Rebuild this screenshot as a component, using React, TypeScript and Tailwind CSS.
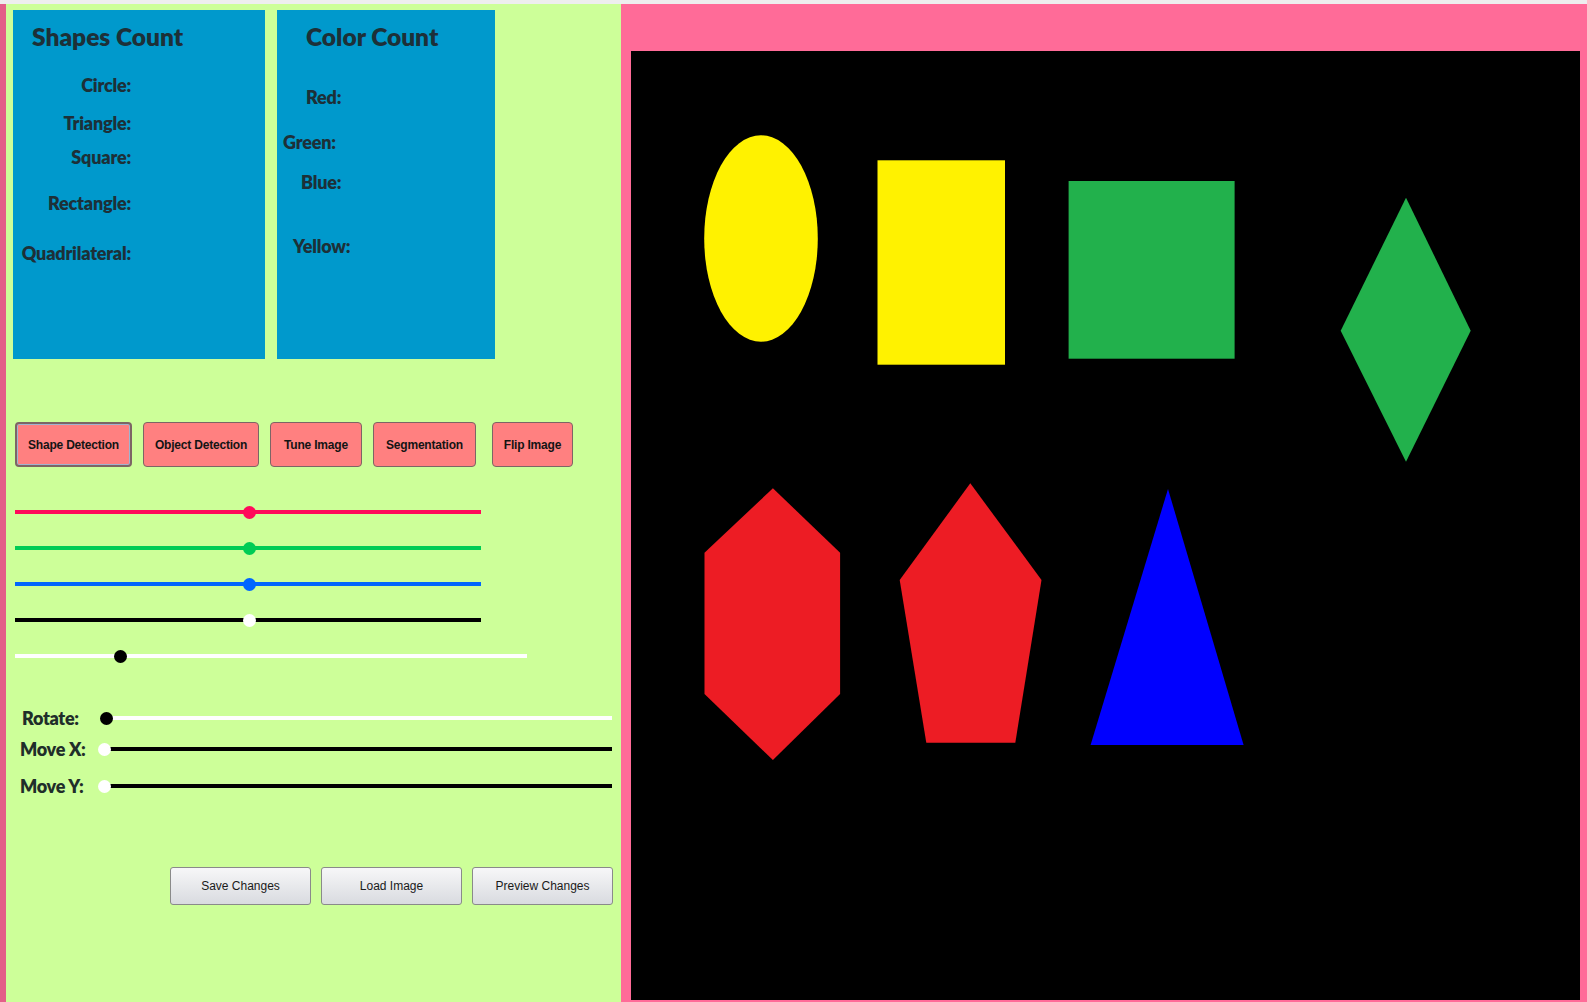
import React from "react";

const lato = { fontFamily: "Lato, 'Open Sans', sans-serif" };

function Slider({
  width,
  track,
  thumb,
  thumbLeft,
}: {
  width: number;
  track: string;
  thumb: string;
  thumbLeft: number;
}) {
  return (
    <div className="relative flex h-[14px] items-center" style={{ width }}>
      <div className={`h-[4px] w-full ${track}`} />
      <div
        className={`absolute top-[0.5px] h-[13px] w-[13px] rounded-full ${thumb}`}
        style={{ left: thumbLeft }}
      />
    </div>
  );
}

function MoveRow({
  label,
  track,
  thumb,
  labelPad,
  thumbLeft,
  className,
}: {
  label: string;
  track: string;
  thumb: string;
  labelPad: string;
  thumbLeft: number;
  className: string;
}) {
  return (
    <div className={`flex h-[20px] items-center ${className}`}>
      <div
        className={`w-[92px] ${labelPad} whitespace-nowrap text-[18px] font-extrabold leading-[20px] tracking-[-0.3px] text-[#1f2e2a]`}
        style={lato}
      >
        {label}
      </div>
      <div className="relative flex h-[14px] flex-1 items-center pl-[6px]">
        <div className={`h-[4px] w-full ${track}`} />
        <div
          className={`absolute top-[0.5px] h-[13px] w-[13px] rounded-full ${thumb}`}
          style={{ left: thumbLeft }}
        />
      </div>
    </div>
  );
}

export default function App() {
  const redBtn =
    "h-[45px] rounded-[4px] border border-[#7d6565] bg-[#ff8080] text-[12px] font-bold tracking-[-0.2px] text-[#141414]";
  const grayBtn =
    "h-[38px] w-[141px] rounded-[3px] border border-[#8a8a8a] bg-gradient-to-b from-[#f7f7f8] to-[#d9dbe0] text-[12px] text-[#1a1a1a]";
  const arial = { fontFamily: "'Liberation Sans', Arial, sans-serif" };
  const labelCls =
    "h-[20px] whitespace-nowrap text-[18px] font-extrabold leading-[20px] tracking-[-0.2px] text-[#1d3038]";

  return (
    <div className="flex h-[1002px] w-[1587px] flex-col overflow-hidden bg-[#eeeeee]">
      <div className="h-[4px] w-full shrink-0" />
      <div className="flex h-[998px] w-full">
        <div className="w-[6px] shrink-0 bg-[#e35f88]" />
        {/* Left control panel */}
        <div className="flex w-[615px] shrink-0 flex-col bg-[#cdff99]">
          {/* count boxes */}
          <div className="ml-[7px] mt-[6px] flex gap-[12px]">
            <div
              className="flex h-[349px] w-[252px] flex-col bg-[#0099cc] pt-[12px]"
              style={lato}
            >
              <div className="h-[30px] whitespace-nowrap pl-[19px] text-[24.5px] font-extrabold leading-[30px] text-[#1d3038]">
                Shapes Count
              </div>
              <div className="w-[118px] text-right">
                <div className={`${labelCls} mt-[23px]`}>Circle:</div>
                <div className={`${labelCls} mt-[18px]`}>Triangle:</div>
                <div className={`${labelCls} mt-[14px]`}>Square:</div>
                <div className={`${labelCls} mt-[26px]`}>Rectangle:</div>
                <div className={`${labelCls} mt-[30px]`}>Quadrilateral:</div>
              </div>
            </div>
            <div
              className="flex h-[349px] w-[218px] flex-col bg-[#0099cc] pt-[12px]"
              style={lato}
            >
              <div className="h-[30px] whitespace-nowrap pl-[29px] text-[24.5px] font-extrabold leading-[30px] text-[#1d3038]">
                Color Count
              </div>
              <div className={`${labelCls} mt-[35px] pl-[29px]`}>Red:</div>
              <div className={`${labelCls} mt-[25px] pl-[6px]`}>Green:</div>
              <div className={`${labelCls} mt-[20px] pl-[24px]`}>Blue:</div>
              <div className={`${labelCls} mt-[44px] pl-[16px]`}>Yellow:</div>
            </div>
          </div>

          {/* tool buttons */}
          <div className="ml-[9px] mt-[63px] flex" style={arial}>
            <button
              className={`${redBtn} w-[117px] border-2 border-[#6f8bb3] shadow-[inset_0_0_0_1px_#9fb4cf]`}
            >
              Shape Detection
            </button>
            <button className={`${redBtn} ml-[11px] w-[116px]`}>Object Detection</button>
            <button className={`${redBtn} ml-[11px] w-[92px]`}>Tune Image</button>
            <button className={`${redBtn} ml-[11px] w-[103px]`}>Segmentation</button>
            <button className={`${redBtn} ml-[16px] w-[81px]`}>Flip Image</button>
          </div>

          {/* colour sliders */}
          <div className="ml-[9px] mt-[38px] flex flex-col gap-[22px]">
            <Slider width={466} track="bg-[#ff0a5a]" thumb="bg-[#ff0a5a]" thumbLeft={227.5} />
            <Slider width={466} track="bg-[#00cc55]" thumb="bg-[#00cc55]" thumbLeft={227.5} />
            <Slider width={466} track="bg-[#0066ff]" thumb="bg-[#0066ff]" thumbLeft={227.5} />
            <Slider width={466} track="bg-black" thumb="bg-white" thumbLeft={227.5} />
            <Slider width={512} track="bg-white" thumb="bg-black" thumbLeft={98.5} />
          </div>

          {/* transform sliders */}
          <div className="mr-[9px] mt-[45px] flex flex-col">
            <MoveRow
              label="Rotate:"
              track="bg-white"
              thumb="bg-black"
              labelPad="pl-[16px]"
              thumbLeft={2}
              className=""
            />
            <MoveRow
              label="Move X:"
              track="bg-black"
              thumb="bg-white"
              labelPad="pl-[14px]"
              thumbLeft={0}
              className="mt-[11px]"
            />
            <MoveRow
              label="Move Y:"
              track="bg-black"
              thumb="bg-white"
              labelPad="pl-[14px]"
              thumbLeft={0}
              className="mt-[17px]"
            />
          </div>

          {/* action buttons */}
          <div className="mt-[71px] flex justify-end gap-[10px] pr-[8px]" style={arial}>
            <button className={grayBtn}>Save Changes</button>
            <button className={grayBtn}>Load Image</button>
            <button className={grayBtn}>Preview Changes</button>
          </div>
        </div>

        {/* Right image area */}
        <div className="flex-1 bg-[#ff6b98] pl-[10px] pt-[47px]">
          <div className="h-[949px] w-[949px] bg-black">
            <svg width="949" height="949" viewBox="0 0 949 949">
              <ellipse cx="130" cy="187.5" rx="56.8" ry="103.2" fill="#fff200" />
              <rect x="246.5" y="109.3" width="127.5" height="204.4" fill="#fff200" />
              <rect x="437.6" y="130" width="166" height="177.7" fill="#22b14c" />
              <polygon points="775,146.7 839.7,279.7 775,410.7 709.7,279.7" fill="#22b14c" />
              <polygon
                points="141.9,437.3 209.1,501.7 209.1,643 141.9,709 73.5,643 73.5,501.7"
                fill="#ed1c24"
              />
              <polygon
                points="339.3,432.3 410.5,529 384.3,691.7 295.3,691.7 268.7,529"
                fill="#ed1c24"
              />
              <polygon points="537,438 612.6,694 459.6,694" fill="#0000ff" />
            </svg>
          </div>
        </div>
      </div>
    </div>
  );
}
